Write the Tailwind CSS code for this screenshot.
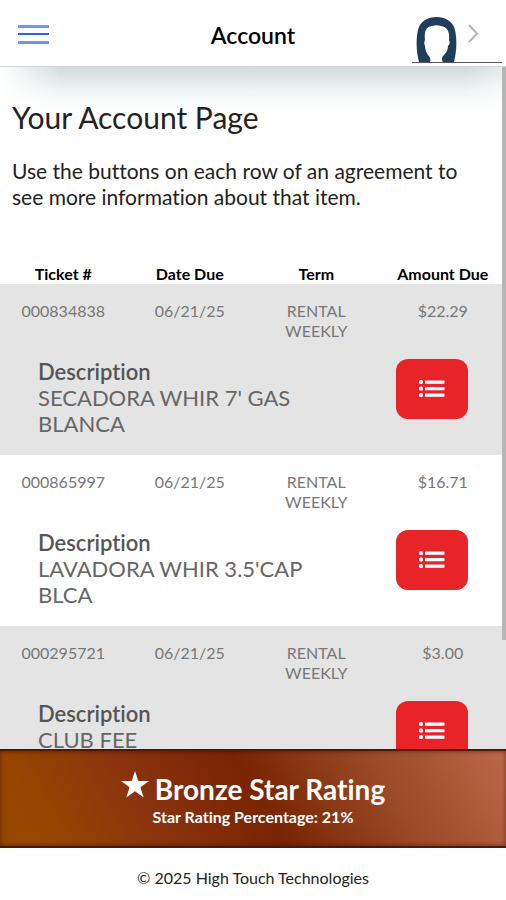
<!DOCTYPE html>
<html lang="en">
<head>
<meta charset="utf-8">
<meta name="viewport" content="width=device-width, initial-scale=1">
<title>Account</title>
<script src="https://cdn.jsdelivr.net/npm/@tailwindcss/browser@4"></script>
</head>
<body class="flex h-screen flex-col overflow-hidden bg-white font-['Lato',sans-serif] text-[#222] [font-variant-ligatures:none]">
<svg class="hidden" aria-hidden="true">
  <symbol id="list" viewBox="0 0 26 20">
    <g fill="#fff"><rect x="0" y="1" width="4" height="4" rx="1.5"/><rect x="0" y="7.500" width="4" height="4" rx="1.5"/><rect x="0" y="14" width="4" height="4" rx="1.5"/><rect x="6" y="1.500" width="19.500" height="3.200" rx=".6"/><rect x="6" y="8" width="19.500" height="3.200" rx=".6"/><rect x="6" y="14.500" width="19.500" height="3.200" rx=".6"/></g>
  </symbol>
</svg>
<header class="grid h-[67px] shrink-0 grid-cols-[1fr_auto_1fr] items-center border-b border-[#d3d6d6]">
  <button type="button" aria-label="Menu" class="ml-[18px] w-8 pt-1">
    <svg class="h-6 w-8" viewBox="0 0 32 24" aria-hidden="true"><rect y="2" width="31" height="3" fill="#6b95f0"/><rect y="10" width="31" height="2" fill="#2468ea"/><rect y="18" width="31" height="3" fill="#6b95f0"/></svg>
  </button>
  <h1 class="pt-1 text-[23px] leading-7 font-semibold text-black">Account</h1>
  <a href="#profile" aria-label="Profile" class="mr-1 mb-[3px] flex h-[46px] w-[90px] items-start self-end justify-self-end border-b border-[#555]">
    <svg class="ml-1 h-[45px] w-[41px]" viewBox="0 0 41 45" aria-hidden="true"><path fill="#1f3e5c" fill-rule="evenodd" d="M3 45C0 33 0 22 2 13C4 4 12 0 20.500 0C29 0 37 4 39 13C41 22 41 33 38 45H27C25 42 26 40 28 38C31 35 32 32 32 29C34 27 34 25 33 23C34 14 31 10 25 9C22 8 19 8 16 9C10 10 8 14 9 23C8 25 8 27 9 29C9 32 10 35 12 38C14 40 15 42 14 45Z"/></svg>
    <svg class="mt-1.5 ml-[9px] h-7 w-4" viewBox="0 0 16 28" fill="none" stroke="#b5b5b5" stroke-width="2" aria-hidden="true"><path d="M3 2L11 10.500L3 19"/></svg>
  </a>
</header>
<main class="relative min-h-0 flex-1 overflow-hidden">
  <div class="absolute inset-x-0 top-0 h-12 bg-[linear-gradient(to_bottom,#d0dada,#dde5e5_20%,#f0f5f5_50%,#fafcfc_75%,#fff)] [mask-image:linear-gradient(to_right,transparent,black_12%,black_92%,#0008)]"></div>
  <div class="absolute top-0 right-0 z-10 h-[573px] w-1 bg-[#b5b5b5]"></div>
  <section class="relative px-3 pt-[30px]">
    <h2 class="text-[30px] leading-10">Your Account Page</h2>
    <p class="mt-[21px] pr-5 text-[21px] leading-[26px]">Use the buttons on each row of an agreement to see more information about that item.</p>
  </section>
  <table class="relative mt-[54px] w-full table-fixed text-center text-base leading-5 text-[#777]">
    <thead class="text-base leading-5 text-black">
      <tr>
        <th scope="col" class="font-bold">Ticket #</th>
        <th scope="col" class="font-bold">Date Due</th>
        <th scope="col" class="font-bold">Term</th>
        <th scope="col" class="font-bold whitespace-nowrap">Amount Due</th>
      </tr>
    </thead>
    <tbody class="bg-[#e4e4e4]">
      <tr class="align-top"><td class="pt-[17px]">000834838</td><td class="pt-[17px]">06/21/25</td><td class="px-6 pt-[17px]">RENTAL WEEKLY</td><td class="pt-[17px]">$22.29</td></tr>
      <tr class="align-top">
        <td colspan="3" class="pt-[18px] pr-10 pb-[18px] pl-[38px] text-left text-[22px] leading-[26px] text-[#666]"><strong class="block font-semibold text-[#555]">Description</strong>SECADORA WHIR 7' GAS BLANCA</td>
        <td class="pt-[18px] pl-4 text-left"><button type="button" aria-label="View details" class="grid h-[60px] w-[72px] place-items-center rounded-xl bg-[#e82429]"><svg class="h-5 w-[26px]" aria-hidden="true"><use href="#list"/></svg></button></td>
      </tr>
    </tbody>
    <tbody class="bg-white">
      <tr class="align-top"><td class="pt-[17px]">000865997</td><td class="pt-[17px]">06/21/25</td><td class="px-6 pt-[17px]">RENTAL WEEKLY</td><td class="pt-[17px]">$16.71</td></tr>
      <tr class="align-top">
        <td colspan="3" class="pt-[18px] pr-10 pb-[18px] pl-[38px] text-left text-[22px] leading-[26px] text-[#666]"><strong class="block font-semibold text-[#555]">Description</strong>LAVADORA WHIR 3.5'CAP BLCA</td>
        <td class="pt-[18px] pl-4 text-left"><button type="button" aria-label="View details" class="grid h-[60px] w-[72px] place-items-center rounded-xl bg-[#e82429]"><svg class="h-5 w-[26px]" aria-hidden="true"><use href="#list"/></svg></button></td>
      </tr>
    </tbody>
    <tbody class="bg-[#e4e4e4]">
      <tr class="align-top"><td class="pt-[17px]">000295721</td><td class="pt-[17px]">06/21/25</td><td class="px-6 pt-[17px]">RENTAL WEEKLY</td><td class="pt-[17px]">$3.00</td></tr>
      <tr class="align-top">
        <td colspan="3" class="pt-[18px] pr-10 pb-[18px] pl-[38px] text-left text-[22px] leading-[26px] text-[#666]"><strong class="block font-semibold text-[#555]">Description</strong>CLUB FEE</td>
        <td class="pt-[18px] pb-5 pl-4 text-left"><button type="button" aria-label="View details" class="grid h-[60px] w-[72px] place-items-center rounded-xl bg-[#e82429]"><svg class="h-5 w-[26px]" aria-hidden="true"><use href="#list"/></svg></button></td>
      </tr>
    </tbody>
  </table>
</main>
<section class="flex h-[99px] shrink-0 flex-col items-center border-y-2 border-[#4d1806] bg-[linear-gradient(60deg,#964800_0%,#964600_10%,#8a330f_30%,#792402_51%,#9a4a26_75%,#bb6848_100%)] pt-5 text-white shadow-[inset_0_0_5px_#3008]">
  <h2 class="flex items-center gap-1.5 text-[28px] leading-9 font-bold"><svg class="mb-2 size-7" viewBox="0 0 28 28" aria-hidden="true"><path fill="#fff" d="M14 0L17.3 10H28L19.4 16.2L22.7 26.5L14 20.2L5.3 26.5L8.6 16.2L0 10H10.700Z"/></svg>Bronze Star Rating</h2>
  <p class="text-base leading-5 font-bold">Star Rating Percentage: 21%</p>
</section>
<footer class="grid h-[52px] shrink-0 place-items-center pt-2 text-base">© 2025 High Touch Technologies</footer>
</body>
</html>
